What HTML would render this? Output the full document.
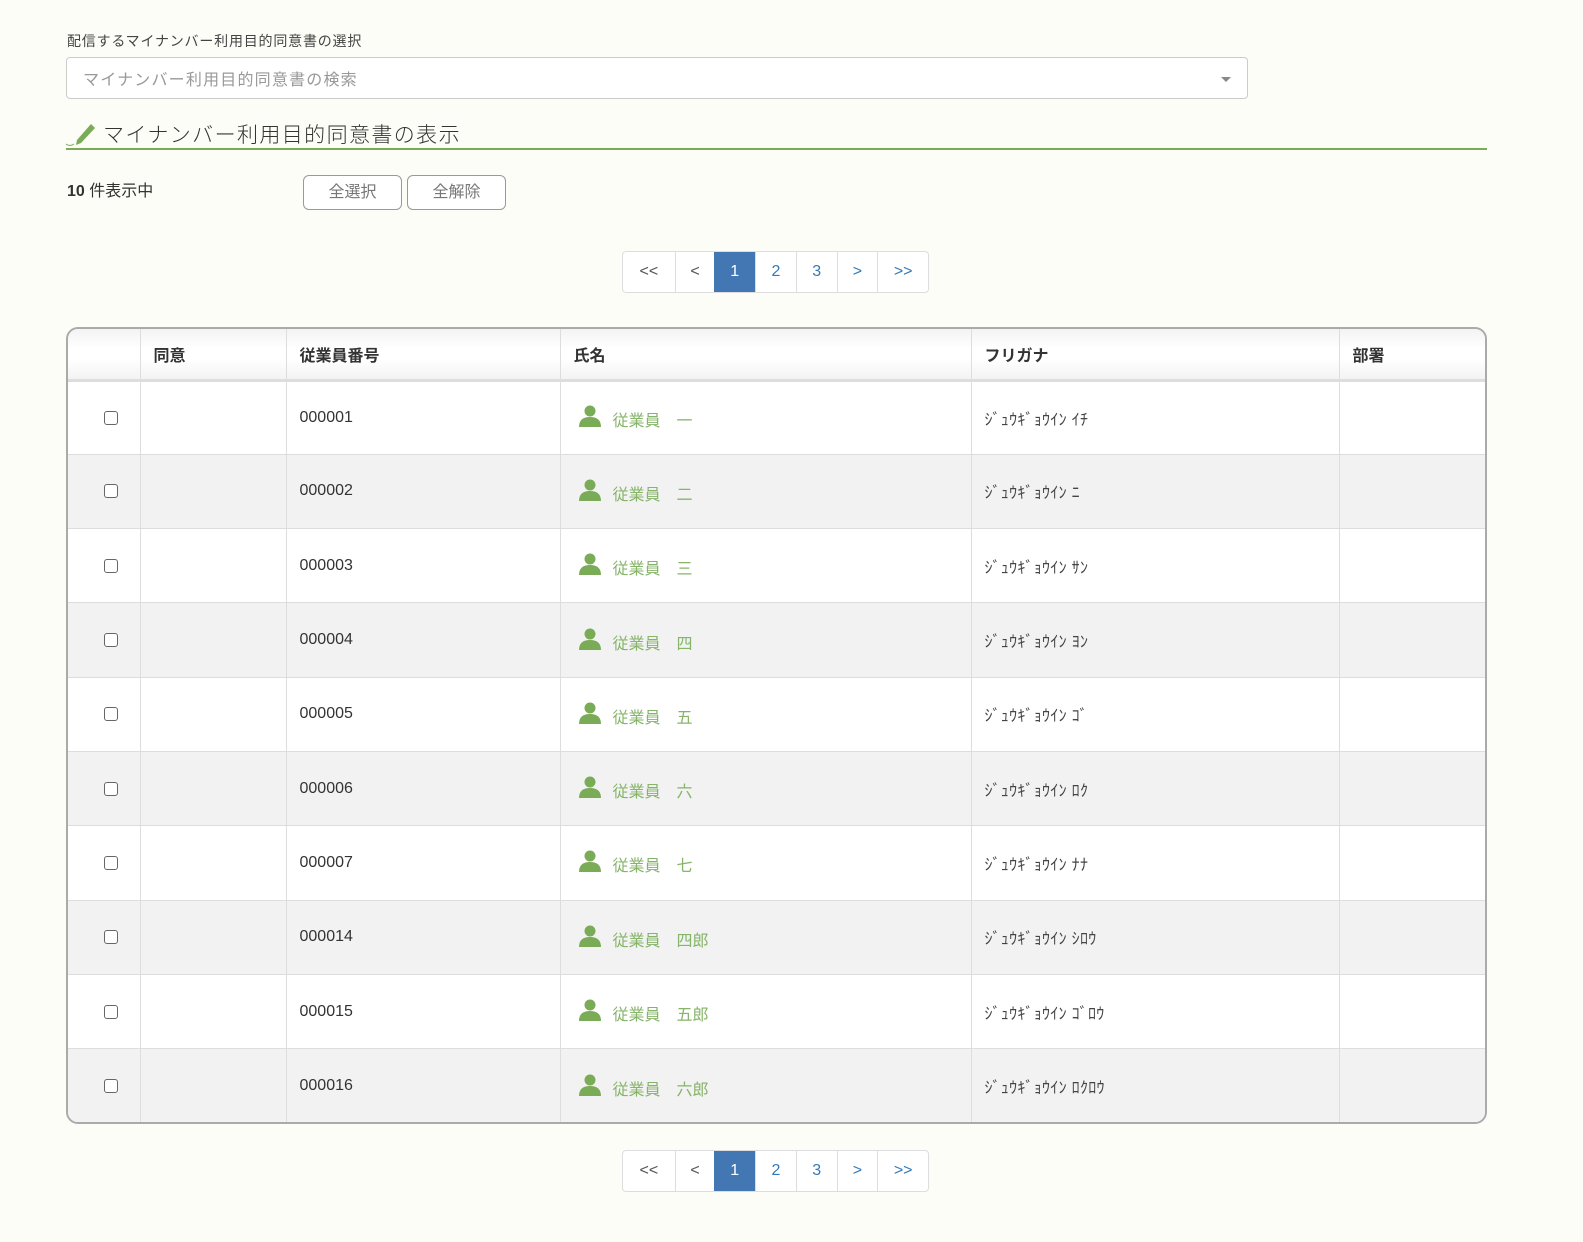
<!DOCTYPE html>
<html><head><meta charset="utf-8"><style>
*{box-sizing:border-box;margin:0;padding:0}
body{width:1583px;height:1242px;background:#fbfdf6;font-family:"Liberation Sans","Noto Sans CJK JP",sans-serif;color:#333;position:relative;overflow:hidden}
.abs{position:absolute}
.lbl{left:67px;top:31px;font-size:14px;color:#444;letter-spacing:0.8px}
.sel{left:66px;top:57px;width:1182px;height:42px;border:1px solid #ccc;border-radius:4px;background:#fff}
.sel span{position:absolute;left:16px;top:8px;font-size:16px;color:#999;letter-spacing:1.2px}
.sel i{position:absolute;right:16px;top:19px;width:0;height:0;border-left:5px solid transparent;border-right:5px solid transparent;border-top:5px solid #888}
.h2{left:103px;top:119px;font-size:21px;color:#333;letter-spacing:1.4px;font-weight:300}
.hline{left:66px;top:148px;width:1421px;height:2px;background:#7aab57}
.cnt{left:67px;top:177px;font-size:16px;color:#333}
.btn{top:175px;height:35px;border:1px solid #999;border-radius:6px;background:#fff;font-size:16px;color:#777;text-align:center;line-height:33px}
.pg{left:622px;width:307px;height:42px;border:1px solid #ddd;border-radius:4px;background:#fff;display:flex;overflow:hidden}
.pg div{height:40px;line-height:40px;text-align:center;font-size:16px;color:#337ab7;border-left:1px solid #ddd}
.pg div:first-child{border-left:none}
.pg .a{background:#4277b3;color:#fff;border-left:none}
.tbl{left:66px;top:327px;width:1421px;height:797px;border:2px solid #aaa;border-radius:12px;overflow:hidden;background:#fff}
table{border-collapse:collapse;width:1417px;table-layout:fixed}
th{height:51px;text-align:left;padding-left:13px;font-size:16px;font-weight:bold;color:#333;background:linear-gradient(#f3f3f3,#fff 40%,#fff 60%,#f3f3f3);border-left:1px solid #ddd;border-bottom:3px solid #ddd}
th:first-child,td:first-child{border-left:none}
td{height:74.3px;border-left:1px solid #ddd;border-top:1px solid #ddd;padding-left:13px;font-size:16px;color:#333;vertical-align:middle}
tr:nth-child(odd) td{background:#f2f2f2}
.cb{display:block;margin:0 auto 0 23px;width:14px;height:14px;border:1px solid #666;border-radius:3px;background:#fff}
.nm{color:#86b469;display:flex;align-items:center;padding-top:3px}
.nm svg{margin-right:12px;margin-left:5px;margin-top:-6px}
.fu{font-size:16px;color:#444;letter-spacing:0.3px}
</style></head><body>
<div class="abs lbl">配信するマイナンバー利用目的同意書の選択</div>
<div class="abs sel"><span>マイナンバー利用目的同意書の検索</span><i></i></div>
<svg class="abs" style="left:64px;top:120px" width="34" height="28" viewBox="0 0 34 28"><path d="M13 20 L27 4 L31 8 L17 23 L12 25 Z" fill="#7aab57"/><path d="M2 24 q4 3 8 0" stroke="#7aab57" fill="none" stroke-width="1"/></svg>
<div class="abs h2">マイナンバー利用目的同意書の表示</div>
<div class="abs hline"></div>
<div class="abs cnt"><b>10</b> 件表示中</div>
<div class="abs btn" style="left:303px;width:99px">全選択</div>
<div class="abs btn" style="left:407px;width:99px">全解除</div>
<div class="abs pg" style="top:251px"><div style="width:52px;color:#555">&lt;&lt;</div><div style="width:40px;color:#555">&lt;</div><div class="a" style="width:41px">1</div><div style="width:41px">2</div><div style="width:41px">3</div><div style="width:41px">&gt;</div><div style="width:51px">&gt;&gt;</div></div>
<div class="abs tbl"><table>
<colgroup><col style="width:72px"><col style="width:146px"><col style="width:274px"><col style="width:411px"><col style="width:368px"><col></colgroup>
<tr><th></th><th>同意</th><th>従業員番号</th><th>氏名</th><th>フリガナ</th><th>部署</th></tr>
<tr><td><span class="cb"></span></td><td></td><td>000001</td><td><div class="nm"><svg width="22" height="22" viewBox="0 0 22 22"><circle cx="11" cy="6" r="5.5" fill="#7aab57"/><path d="M0 22 Q0 12 11 12 Q22 12 22 22Z" fill="#7aab57"/></svg>従業員　一</div></td><td class="fu">ｼﾞｭｳｷﾞｮｳｲﾝ ｲﾁ</td><td></td></tr>
<tr><td><span class="cb"></span></td><td></td><td>000002</td><td><div class="nm"><svg width="22" height="22" viewBox="0 0 22 22"><circle cx="11" cy="6" r="5.5" fill="#7aab57"/><path d="M0 22 Q0 12 11 12 Q22 12 22 22Z" fill="#7aab57"/></svg>従業員　二</div></td><td class="fu">ｼﾞｭｳｷﾞｮｳｲﾝ ﾆ</td><td></td></tr>
<tr><td><span class="cb"></span></td><td></td><td>000003</td><td><div class="nm"><svg width="22" height="22" viewBox="0 0 22 22"><circle cx="11" cy="6" r="5.5" fill="#7aab57"/><path d="M0 22 Q0 12 11 12 Q22 12 22 22Z" fill="#7aab57"/></svg>従業員　三</div></td><td class="fu">ｼﾞｭｳｷﾞｮｳｲﾝ ｻﾝ</td><td></td></tr>
<tr><td><span class="cb"></span></td><td></td><td>000004</td><td><div class="nm"><svg width="22" height="22" viewBox="0 0 22 22"><circle cx="11" cy="6" r="5.5" fill="#7aab57"/><path d="M0 22 Q0 12 11 12 Q22 12 22 22Z" fill="#7aab57"/></svg>従業員　四</div></td><td class="fu">ｼﾞｭｳｷﾞｮｳｲﾝ ﾖﾝ</td><td></td></tr>
<tr><td><span class="cb"></span></td><td></td><td>000005</td><td><div class="nm"><svg width="22" height="22" viewBox="0 0 22 22"><circle cx="11" cy="6" r="5.5" fill="#7aab57"/><path d="M0 22 Q0 12 11 12 Q22 12 22 22Z" fill="#7aab57"/></svg>従業員　五</div></td><td class="fu">ｼﾞｭｳｷﾞｮｳｲﾝ ｺﾞ</td><td></td></tr>
<tr><td><span class="cb"></span></td><td></td><td>000006</td><td><div class="nm"><svg width="22" height="22" viewBox="0 0 22 22"><circle cx="11" cy="6" r="5.5" fill="#7aab57"/><path d="M0 22 Q0 12 11 12 Q22 12 22 22Z" fill="#7aab57"/></svg>従業員　六</div></td><td class="fu">ｼﾞｭｳｷﾞｮｳｲﾝ ﾛｸ</td><td></td></tr>
<tr><td><span class="cb"></span></td><td></td><td>000007</td><td><div class="nm"><svg width="22" height="22" viewBox="0 0 22 22"><circle cx="11" cy="6" r="5.5" fill="#7aab57"/><path d="M0 22 Q0 12 11 12 Q22 12 22 22Z" fill="#7aab57"/></svg>従業員　七</div></td><td class="fu">ｼﾞｭｳｷﾞｮｳｲﾝ ﾅﾅ</td><td></td></tr>
<tr><td><span class="cb"></span></td><td></td><td>000014</td><td><div class="nm"><svg width="22" height="22" viewBox="0 0 22 22"><circle cx="11" cy="6" r="5.5" fill="#7aab57"/><path d="M0 22 Q0 12 11 12 Q22 12 22 22Z" fill="#7aab57"/></svg>従業員　四郎</div></td><td class="fu">ｼﾞｭｳｷﾞｮｳｲﾝ ｼﾛｳ</td><td></td></tr>
<tr><td><span class="cb"></span></td><td></td><td>000015</td><td><div class="nm"><svg width="22" height="22" viewBox="0 0 22 22"><circle cx="11" cy="6" r="5.5" fill="#7aab57"/><path d="M0 22 Q0 12 11 12 Q22 12 22 22Z" fill="#7aab57"/></svg>従業員　五郎</div></td><td class="fu">ｼﾞｭｳｷﾞｮｳｲﾝ ｺﾞﾛｳ</td><td></td></tr>
<tr><td><span class="cb"></span></td><td></td><td>000016</td><td><div class="nm"><svg width="22" height="22" viewBox="0 0 22 22"><circle cx="11" cy="6" r="5.5" fill="#7aab57"/><path d="M0 22 Q0 12 11 12 Q22 12 22 22Z" fill="#7aab57"/></svg>従業員　六郎</div></td><td class="fu">ｼﾞｭｳｷﾞｮｳｲﾝ ﾛｸﾛｳ</td><td></td></tr>
</table></div>
<div class="abs pg" style="top:1150px"><div style="width:52px;color:#555">&lt;&lt;</div><div style="width:40px;color:#555">&lt;</div><div class="a" style="width:41px">1</div><div style="width:41px">2</div><div style="width:41px">3</div><div style="width:41px">&gt;</div><div style="width:51px">&gt;&gt;</div></div>
</body></html>
